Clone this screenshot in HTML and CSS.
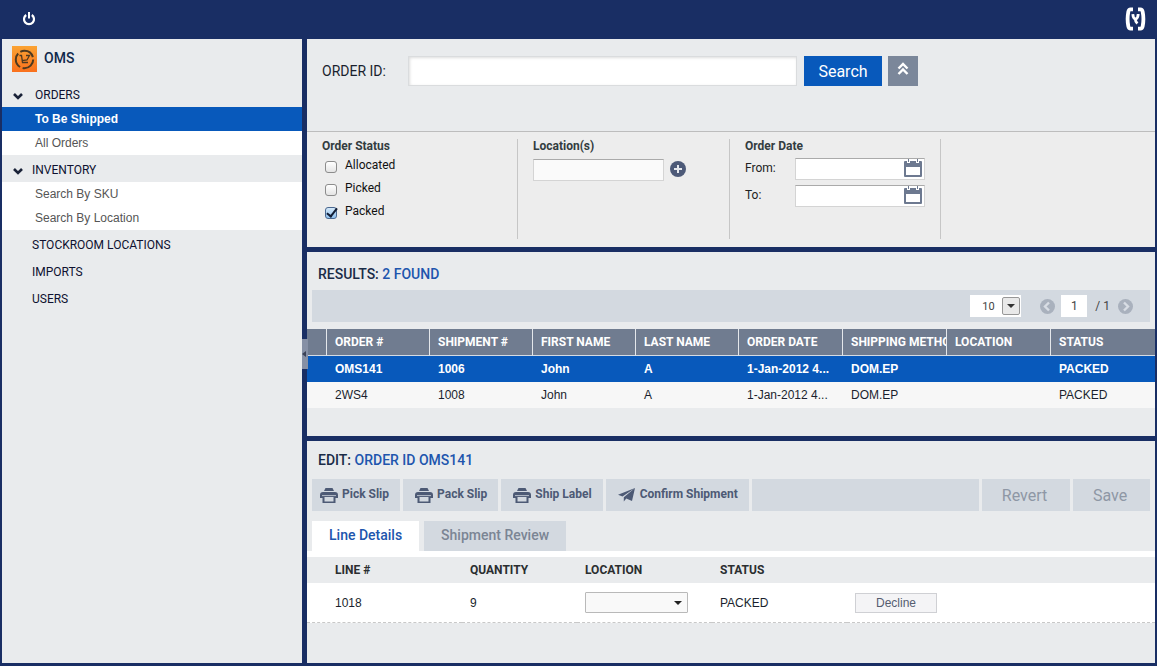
FILE: index.html
```html
<!DOCTYPE html>
<html lang="en">
<head>
<meta charset="UTF-8">
<meta name="viewport" content="width=device-width, initial-scale=1.0">
<title>OMS - Orders To Be Shipped</title>
<link rel="stylesheet" href="styles.css">
</head>
<body>

<svg width="0" height="0" class="sprite" aria-hidden="true">
    <symbol id="chevron" viewBox="0 0 10 8">
        <path d="M1 2 L5 6 L9 2" fill="none" stroke="#1a2238" stroke-width="2.6"/>
    </symbol>
    <symbol id="calendar" viewBox="0 0 18 18">
        <path fill="#6d7990" fill-rule="evenodd" d="M1 2 H3 V4 H6 V2 H12 V4 H15 V2 H17 Q18 2 18 3 V17 Q18 18 17 18 H1 Q0 18 0 17 V3 Q0 2 1 2 Z M2 8 V16 H16 V8 Z"/>
        <path fill="#6d7990" d="M4 0 H5 V3 H4 Z M13 0 H14 V3 H13 Z"/>
    </symbol>
    <symbol id="printer" viewBox="0 0 18 16">
        <path fill="#4d5a75" d="M5 2 Q5 1 6 1 H12 Q13 1 13 2 L14 4 H4 Z"/>
        <path fill="#4d5a75" fill-rule="evenodd" d="M3 5 H15 Q18 5 18 8 V11 H15.5 V16 H2.5 V11 H0 V8 Q0 5 3 5 Z M4.5 10 V14.5 H13.5 V10 Z"/>
        <path stroke="#d3d9e0" stroke-width="0.8" d="M2 8.6 H16"/>
    </symbol>
</svg>

<div class="app">
    <header class="topbar">
        <button type="button" class="icon-btn" aria-label="Log out">
            <svg width="12" height="14" viewBox="0 0 12 14">
                <path d="M3.2 3 A5 5 0 1 0 8.8 3" fill="none" stroke="#fff" stroke-width="2.2"/>
                <path d="M6 0 V6.5" stroke="#fff" stroke-width="2"/>
            </svg>
        </button>
        <svg class="brand" width="21" height="24" viewBox="0 0 21 24" role="img" aria-label="Logo">
            <path d="M8 2.4 H5.6 Q3.8 2.4 3.3 4.8 Q1.9 12 3.3 19.2 Q3.8 21.6 5.6 21.6 H8 M13 2.4 H15.4 Q17.2 2.4 17.7 4.8 Q19.1 12 17.7 19.2 Q17.2 21.6 15.4 21.6 H13" fill="none" stroke="#fff" stroke-width="3.8"/>
            <path d="M7.8 7.2 Q8.2 11.6 10.4 12 M13.2 7 Q13.2 11 10.4 12.4 Q10.4 14.6 12.4 16.6" fill="none" stroke="#fff" stroke-width="2.8"/>
        </svg>
    </header>

    <div class="workspace">
        <nav class="sidebar">
            <div class="app-name">
                <svg width="25" height="26" viewBox="0 0 25 26" aria-hidden="true">
                    <defs>
                        <linearGradient id="orange" x1="0" y1="0" x2="0" y2="1">
                            <stop offset="0" stop-color="#fba333"/>
                            <stop offset="1" stop-color="#f9701d"/>
                        </linearGradient>
                    </defs>
                    <rect width="25" height="26" fill="url(#orange)"/>
                    <circle cx="12.5" cy="13.5" r="8.7" fill="none" stroke="#4f3a20" stroke-width="2" stroke-dasharray="15.5 2.7"/>
                    <path d="M7.5 9.5 H9.5 L10.5 16.5 H16 M10 14.7 L15 14 L17.5 9.5 H14" fill="none" stroke="#4f3a20" stroke-width="1.3"/>
                </svg>
                <span>OMS</span>
            </div>
            <ul class="menu">
                <li>
                    <a href="#" class="section first"><svg class="arrow"><use href="#chevron"/></svg>ORDERS</a>
                    <ul class="submenu">
                        <li><a href="#" class="active">To Be Shipped</a></li>
                        <li><a href="#">All Orders</a></li>
                    </ul>
                </li>
                <li>
                    <a href="#" class="section"><svg class="arrow"><use href="#chevron"/></svg>INVENTORY</a>
                    <ul class="submenu">
                        <li><a href="#">Search By SKU</a></li>
                        <li><a href="#">Search By Location</a></li>
                    </ul>
                </li>
                <li><a href="#" class="section">STOCKROOM LOCATIONS</a></li>
                <li><a href="#" class="section">IMPORTS</a></li>
                <li><a href="#" class="section">USERS</a></li>
            </ul>
        </nav>

        <div class="splitter">
            <button type="button" class="collapse" aria-label="Collapse sidebar">
                <svg width="4" height="6" viewBox="0 0 4 6"><path d="M4 0 V6 L0 3 Z" fill="#3c4357"/></svg>
            </button>
        </div>

        <main class="content">
            <form class="panel search-panel">
                <div class="search-row">
                    <label for="orderId">ORDER ID:</label>
                    <input type="text" id="orderId" name="orderId">
                    <button type="submit" class="search-btn">Search</button>
                    <button type="button" class="toggle-btn" aria-label="Hide filters">
                        <svg width="12" height="14" viewBox="0 0 12 14"><path d="M1.5 6.5 L6 2 L10.5 6.5 M1.5 12 L6 7.5 L10.5 12" fill="none" stroke="#fff" stroke-width="2.4"/></svg>
                    </button>
                </div>
                <div class="filters">
                    <fieldset class="filter">
                        <legend>Order Status</legend>
                        <label class="check"><input type="checkbox" name="allocated">Allocated</label>
                        <label class="check"><input type="checkbox" name="picked">Picked</label>
                        <label class="check"><input type="checkbox" name="packed" checked>Packed</label>
                    </fieldset>
                    <div class="filter">
                        <label class="filter-title" for="locations">Location(s)</label>
                        <div class="location-row">
                            <input type="text" id="locations" name="locations">
                            <button type="button" class="icon-btn" aria-label="Add location">
                                <svg width="16" height="16" viewBox="0 0 16 16"><circle cx="8" cy="8" r="8" fill="#4d5a78"/><path d="M8 4 V12 M4 8 H12" stroke="#e6e9ee" stroke-width="2"/></svg>
                            </button>
                        </div>
                    </div>
                    <fieldset class="filter">
                        <legend>Order Date</legend>
                        <div class="date-row">
                            <label for="dateFrom">From:</label>
                            <span class="date-box">
                                <input type="text" id="dateFrom" name="dateFrom">
                                <button type="button" class="icon-btn" aria-label="Pick from date"><svg width="18" height="18"><use href="#calendar"/></svg></button>
                            </span>
                        </div>
                        <div class="date-row">
                            <label for="dateTo">To:</label>
                            <span class="date-box">
                                <input type="text" id="dateTo" name="dateTo">
                                <button type="button" class="icon-btn" aria-label="Pick to date"><svg width="18" height="18"><use href="#calendar"/></svg></button>
                            </span>
                        </div>
                    </fieldset>
                </div>
            </form>

            <section class="panel results-panel">
                <h2>RESULTS: <span>2 FOUND</span></h2>
                <div class="pager">
                    <span class="page-size">
                        <select aria-label="Results per page">
                            <option>10</option>
                            <option>25</option>
                            <option>50</option>
                        </select>
                        <svg width="18" height="18" viewBox="0 0 18 18"><rect x="0.5" y="0.5" width="17" height="17" rx="1.5" fill="#e9e9e9" stroke="#979797"/><path d="M5 7 H13 L9 11 Z" fill="#333"/></svg>
                    </span>
                    <button type="button" class="icon-btn" aria-label="Previous page" disabled>
                        <svg width="15" height="15" viewBox="0 0 15 15"><circle cx="7.5" cy="7.5" r="7.5" fill="#a9b1bd"/><path d="M9 3.5 L5 7.5 L9 11.5" fill="none" stroke="#d8dde4" stroke-width="2.4"/></svg>
                    </button>
                    <input type="text" class="page" value="1" aria-label="Page">
                    <span class="page-count">/ 1</span>
                    <button type="button" class="icon-btn" aria-label="Next page" disabled>
                        <svg width="15" height="15" viewBox="0 0 15 15"><circle cx="7.5" cy="7.5" r="7.5" fill="#a9b1bd"/><path d="M6 3.5 L10 7.5 L6 11.5" fill="none" stroke="#d8dde4" stroke-width="2.4"/></svg>
                    </button>
                </div>
                <table class="results">
                    <colgroup><col class="col-mark"><col span="4" class="col-name"><col span="4"></colgroup>
                    <thead>
                        <tr>
                            <th></th>
                            <th>ORDER #</th>
                            <th>SHIPMENT #</th>
                            <th>FIRST NAME</th>
                            <th>LAST NAME</th>
                            <th>ORDER DATE</th>
                            <th>SHIPPING METHOD</th>
                            <th>LOCATION</th>
                            <th>STATUS</th>
                        </tr>
                    </thead>
                    <tbody>
                        <tr class="selected">
                            <td></td>
                            <td>OMS141</td>
                            <td>1006</td>
                            <td>John</td>
                            <td>A</td>
                            <td>1-Jan-2012 4...</td>
                            <td>DOM.EP</td>
                            <td></td>
                            <td>PACKED</td>
                        </tr>
                        <tr>
                            <td></td>
                            <td>2WS4</td>
                            <td>1008</td>
                            <td>John</td>
                            <td>A</td>
                            <td>1-Jan-2012 4...</td>
                            <td>DOM.EP</td>
                            <td></td>
                            <td>PACKED</td>
                        </tr>
                    </tbody>
                </table>
            </section>

            <section class="panel edit-panel">
                <h2>EDIT: <span>ORDER ID OMS141</span></h2>
                <div class="actions">
                    <button type="button" class="action"><svg width="18" height="16"><use href="#printer"/></svg><span>Pick Slip</span></button>
                    <button type="button" class="action"><svg width="18" height="16"><use href="#printer"/></svg><span>Pack Slip</span></button>
                    <button type="button" class="action"><svg width="18" height="16"><use href="#printer"/></svg><span>Ship Label</span></button>
                    <button type="button" class="action">
                        <svg width="18" height="16" viewBox="0 0 18 16"><path d="M17 1 L0 7.8 L4.5 9.6 Z M17 1 L5.8 10.3 V14.5 L8.3 11.5 L14 14 Z" fill="#4d5a75"/></svg>
                        <span>Confirm Shipment</span>
                    </button>
                    <div class="filler"></div>
                    <button type="button" class="form-btn revert" disabled>Revert</button>
                    <button type="button" class="form-btn" disabled>Save</button>
                </div>
                <div class="tabs" role="tablist">
                    <button type="button" class="tab current" role="tab" aria-selected="true">Line Details</button>
                    <button type="button" class="tab" role="tab" aria-selected="false">Shipment Review</button>
                </div>
                <table class="lines">
                    <colgroup><col class="col-line"><col class="col-qty"><col class="col-loc"><col class="col-status"><col></colgroup>
                    <thead>
                        <tr>
                            <th>LINE #</th>
                            <th>QUANTITY</th>
                            <th>LOCATION</th>
                            <th>STATUS</th>
                            <th></th>
                        </tr>
                    </thead>
                    <tbody>
                        <tr>
                            <td>1018</td>
                            <td>9</td>
                            <td>
                                <span class="line-location">
                                    <select aria-label="Line location"><option></option></select>
                                    <svg width="8" height="4" viewBox="0 0 8 4"><path d="M0 0 H8 L4 4 Z" fill="#222"/></svg>
                                </span>
                            </td>
                            <td>PACKED</td>
                            <td><button type="button" class="decline">Decline</button></td>
                        </tr>
                    </tbody>
                </table>
            </section>
        </main>
    </div>
</div>

</body>
</html>
```
FILE: styles.css
```css
* {
    box-sizing: border-box;
}
body {
    margin: 0;
    font-family: "Liberation Sans", Arial, sans-serif;
    font-size: 12px;
    color: #1a1f2e;
    background-color: #192e64;
}
button, input, select {
    font-family: inherit;
    font-size: 12px;
    margin: 0;
}
button {
    border: none;
    padding: 0;
    cursor: pointer;
}
svg {
    display: block;
    flex: none;
}
a {
    text-decoration: none;
}
.sprite {
    position: absolute;
}
.icon-btn {
    background: none;
}
.app {
    display: flex;
    flex-direction: column;
    min-height: 100vh;
    padding: 0 2px 3px;
}

/* top bar */
.topbar {
    display: flex;
    justify-content: space-between;
    align-items: center;
    height: 39px;
    padding: 0 9px 2px 21px;
}
.workspace {
    display: flex;
    flex: 1;
}

/* sidebar */
.sidebar {
    width: 300px;
    flex: none;
    background-color: #e9ebed;
    font-family: Roboto, Arial, sans-serif;
}
.app-name {
    display: flex;
    gap: 7px;
    padding: 7px 10px 8px;
    font-size: 14px;
    font-weight: 500;
    line-height: 24px;
    color: #10294b;
}
.menu, .submenu {
    list-style: none;
    margin: 0;
    padding: 0;
}
.section {
    display: block;
    position: relative;
    height: 27px;
    padding: 1px 0 0 30px;
    line-height: 28px;
    color: #0e1130;
}
.section.first {
    padding-left: 33px;
}
.arrow {
    position: absolute;
    left: 11px;
    top: 12px;
    width: 10px;
    height: 8px;
}
.submenu a {
    display: block;
    padding-left: 33px;
    line-height: 24px;
    font-family: "Liberation Sans", Arial, sans-serif;
    color: #555;
    background-color: #fff;
}
.submenu .active {
    color: #fff;
    font-weight: bold;
    background-color: #0859bb;
}

/* splitter */
.splitter {
    position: relative;
    width: 5px;
    flex: none;
}
.collapse {
    position: absolute;
    left: 0;
    top: 300px;
    z-index: 1;
    display: flex;
    align-items: center;
    width: 6px;
    height: 30px;
    background-color: #8690a5;
}

/* panels */
.content {
    display: flex;
    flex-direction: column;
    gap: 5px;
    flex: 1;
    min-width: 0;
}
.panel {
    background-color: #e9ebed;
}
h2 {
    height: 38px;
    margin: 0;
    padding: 0 11px;
    font-family: Roboto, Arial, sans-serif;
    font-size: 14px;
    font-weight: 500;
    line-height: 38px;
    color: #1a2c47;
}
h2 span {
    color: #2055ad;
}

/* search */
.search-panel {
    font-family: Roboto, Arial, sans-serif;
}
.search-row {
    display: flex;
    height: 92px;
    padding: 17px 15px 0;
}
.search-row label {
    width: 86px;
    font-size: 14px;
    line-height: 30px;
}
.search-row input {
    width: 389px;
    height: 30px;
    padding: 0 6px;
    border: 1px solid #dadcde;
    box-shadow: inset 1px 1px 3px #ddd;
    background-color: #fff;
}
.search-btn {
    width: 78px;
    height: 30px;
    margin: 0 6px 0 7px;
    font-size: 16px;
    color: #fff;
    background-color: #0859bb;
}
.toggle-btn {
    display: flex;
    justify-content: center;
    width: 30px;
    height: 30px;
    padding-top: 6px;
    background-color: #7b879a;
}
.filters {
    display: grid;
    grid-template-columns: 211px 212px 211px 1fr;
    height: 116px;
    padding: 7px 0 8px;
    border-top: 1px solid #bdbdbd;
    background-color: #ededed;
}
.filter {
    min-width: 0;
    margin: 0;
    padding: 0 15px;
    border: none;
    border-right: 1px solid #c6c6c6;
}
.filter legend, .filter-title {
    float: left;
    width: 100%;
    height: 15px;
    padding: 0;
    font-size: 12px;
    font-weight: bold;
    line-height: 15px;
    color: #333c40;
}
.check {
    clear: both;
    display: flex;
    gap: 8px;
    padding-left: 3px;
    line-height: 23px;
    color: #111;
}
.check input {
    appearance: none;
    position: relative;
    width: 12px;
    height: 12px;
    margin-top: 7px;
    border: 1px solid #8c8c8c;
    border-radius: 3px;
    background: linear-gradient(#fff, #e4e4e4);
}
.check input:checked {
    border-color: #4a6890;
    background: linear-gradient(#d4e8f8, #8fc0ee);
}
.check input:checked::after {
    content: "";
    box-sizing: border-box;
    position: absolute;
    left: 3px;
    top: -2px;
    width: 6px;
    height: 11px;
    border: solid #111c33;
    border-width: 0 2px 2px 0;
    transform: rotate(38deg);
}
.location-row {
    clear: both;
    display: flex;
    gap: 6px;
    padding-top: 5px;
}
.location-row input, .date-box {
    width: 131px;
    height: 22px;
    padding: 0 4px;
    border: 1px solid #d4d4d4;
    border-top-color: #aaa;
    background-color: #fafafa;
}
.location-row svg {
    margin-bottom: 2px;
}
.date-row {
    clear: both;
    display: flex;
    padding-top: 4px;
    margin-bottom: 1px;
    color: #222;
}
.date-row label {
    width: 50px;
    line-height: 20px;
}
.date-box {
    display: flex;
    align-items: center;
    width: 130px;
    padding: 0 2px 2px 0;
    background-color: #fff;
}
.date-box input {
    flex: 1;
    min-width: 0;
    padding: 0 4px;
    border: none;
    background: none;
}

/* results */
.results-panel {
    padding-bottom: 28px;
}
.results-panel h2 {
    padding-top: 3px;
}
.pager {
    display: flex;
    justify-content: flex-end;
    align-items: center;
    height: 32px;
    margin: 0 5px 7px;
    padding-right: 17px;
    font-family: Roboto, Arial, sans-serif;
    color: #444;
    background-color: #d3d9e0;
}
.page-size {
    position: relative;
    margin-right: 19px;
}
.page-size select {
    appearance: none;
    display: block;
    width: 51px;
    height: 22px;
    padding: 0 0 0 12px;
    border: none;
    font-size: 11px;
    color: #444;
    background-color: #fff;
}
.page-size svg {
    position: absolute;
    right: 1px;
    top: 2px;
    pointer-events: none;
}
.page {
    width: 26px;
    height: 22px;
    margin: 0 8px 0 6px;
    padding: 0;
    border: none;
    text-align: center;
    color: #444;
}
.page-count {
    margin-right: 8px;
}
table {
    width: 100%;
    border-collapse: separate;
    border-spacing: 0;
    table-layout: fixed;
}
th, td {
    padding: 0 0 0 8px;
    text-align: left;
    white-space: nowrap;
    overflow: hidden;
}
th {
    font-family: Roboto, Arial, sans-serif;
    font-size: 12px;
}
.col-mark {
    width: 20px;
}
.col-name {
    width: 103px;
}
.results th {
    height: 27px;
    border-right: 1px solid #e4e7eb;
    border-bottom: 1px solid #d5dbe3;
    color: #fff;
    background-color: #707c90;
}
.results th:last-child {
    border-right: none;
}
.results td {
    height: 26px;
    background-color: #f7f7f7;
}
.results .selected td {
    color: #fff;
    font-weight: bold;
    background-color: #0859bb;
}

/* edit */
.edit-panel {
    flex: 1;
}
.actions {
    display: flex;
    gap: 3px;
    height: 32px;
    margin: 0 5px 10px;
    font-family: Roboto, Arial, sans-serif;
}
.action {
    display: flex;
    gap: 4px;
    padding: 0 11px 0 12px;
    font-weight: bold;
    line-height: 30px;
    color: #4d5a75;
    background-color: #d3d9e0;
}
.action:first-child {
    padding-left: 8px;
}
.action svg {
    margin-top: 8px;
}
.filler {
    flex: 1;
    background-color: #d3d9e0;
}
.form-btn {
    width: 77px;
    padding-right: 3px;
    font-size: 16px;
    color: #8e97a5;
    background-color: #d3d9e0;
}
.revert {
    width: 88px;
}
.tabs {
    display: flex;
    gap: 5px;
    padding: 0 5px;
    border-bottom: 6px solid #fff;
    font-family: Roboto, Arial, sans-serif;
}
.tab {
    height: 30px;
    padding: 0 17px 2px;
    font-size: 14px;
    font-weight: 500;
    color: #7b8594;
    background-color: #d3d9e0;
}
.tab.current {
    color: #2055ad;
    background-color: #fff;
}
.col-line {
    width: 155px;
}
.col-qty {
    width: 115px;
}
.col-loc, .col-status {
    width: 135px;
}
.lines th {
    height: 26px;
    color: #2b2e30;
}
.lines td {
    height: 40px;
    border-bottom: 1px dashed #c8c8c8;
    background-color: #fff;
}
.lines th:first-child, .lines td:first-child {
    padding-left: 28px;
}
.line-location {
    display: block;
    position: relative;
    width: 103px;
}
.line-location select {
    appearance: none;
    display: block;
    width: 100%;
    height: 21px;
    border: 1px solid #b9b9b9;
    border-radius: 1px;
    background-color: #f9f9f9;
}
.line-location svg {
    position: absolute;
    right: 6px;
    top: 9px;
    pointer-events: none;
}
.decline {
    display: block;
    width: 82px;
    height: 20px;
    border: 1px solid #cfd0d4;
    color: #555d70;
    background-color: #f4f4f6;
}
```
